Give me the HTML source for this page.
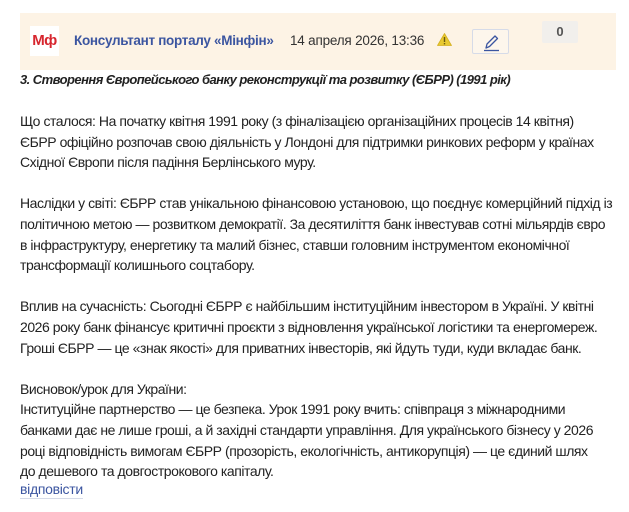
<!DOCTYPE html>
<html><head><meta charset="utf-8"><style>
*{margin:0;padding:0;box-sizing:border-box}
body{width:629px;height:512px;background:#fff;font-family:"Liberation Sans",Arial,sans-serif;color:#222;position:relative;overflow:hidden}
.hdr{position:absolute;left:20px;top:13px;width:596px;height:57px;background:#fdf3e5}
.logo{position:absolute;left:10px;top:13px;width:29px;height:30px;background:#fff;color:#d7262e;font-weight:bold;font-size:15px;line-height:30px;text-align:center;letter-spacing:-0.5px}
.name{position:absolute;left:54px;top:20px;font-size:13.5px;font-weight:bold;color:#3b55a0;letter-spacing:-0.3px}
.date{position:absolute;left:270px;top:20px;font-size:13.5px;color:#333;letter-spacing:-0.2px}
.warn{position:absolute;left:417px;top:20px}
.edit{position:absolute;left:452px;top:16px;width:37px;height:25px;border:1px solid #d6dbe8;border-radius:2px;background:#fdf6ec}
.cnt{position:absolute;left:522px;top:8px;width:36px;height:22px;background:#f1efec;border-radius:2px;font-size:13px;font-weight:bold;color:#555;text-align:center;line-height:22px}
.title{position:absolute;left:20px;top:72px;font-size:13px;font-weight:bold;font-style:italic;color:#222;letter-spacing:-0.55px;white-space:nowrap}
.txt{position:absolute;left:20px;top:111px;font-size:14px;line-height:20.6px;white-space:nowrap;letter-spacing:-0.45px}
a{position:absolute;left:20px;top:480px;font-size:14px;color:#3b55a0;text-decoration:none;border-bottom:1px solid #d6dbe8;letter-spacing:-0.3px;line-height:18px}
</style></head><body>
<div class="hdr">
<div class="logo">Мф</div>
<div class="name">Консультант порталу «Мінфін»</div>
<div class="date">14 апреля 2026, 13:36</div>
<svg class="warn" width="15" height="13" viewBox="0 0 15 13"><path d="M7.5 0.5L14.5 12.5H0.5Z" fill="#e8c930" stroke="#d4b020" stroke-width="0.8" stroke-linejoin="round"/><rect x="6.8" y="4" width="1.4" height="5" fill="#6b5a10"/><rect x="6.8" y="10" width="1.4" height="1.4" fill="#6b5a10"/></svg>
<div class="edit"><svg width="37" height="25" viewBox="0 0 37 25"><path d="M13 18L14 14L22 6L24.5 8.5L16.5 16.5Z" fill="none" stroke="#3b55a0" stroke-width="1.3" stroke-linejoin="round"/><line x1="11" y1="20.5" x2="26" y2="20.5" stroke="#3b55a0" stroke-width="1.3"/></svg></div>
<div class="cnt">0</div>
</div>
<div class="title">3. Створення Європейського банку реконструкції та розвитку (ЄБРР) (1991 рік)</div>
<div class="txt">Що сталося: На початку квітня 1991 року (з фіналізацією організаційних процесів 14 квітня)<br>ЄБРР офіційно розпочав свою діяльність у Лондоні для підтримки ринкових реформ у країнах<br>Східної Європи після падіння Берлінського муру.<br><br>Наслідки у світі: ЄБРР став унікальною фінансовою установою, що поєднує комерційний підхід із<br>політичною метою — розвитком демократії. За десятиліття банк інвестував сотні мільярдів євро<br>в інфраструктуру, енергетику та малий бізнес, ставши головним інструментом економічної<br>трансформації колишнього соцтабору.<br><br>Вплив на сучасність: Сьогодні ЄБРР є найбільшим інституційним інвестором в Україні. У квітні<br>2026 року банк фінансує критичні проєкти з відновлення української логістики та енергомереж.<br>Гроші ЄБРР — це «знак якості» для приватних інвесторів, які йдуть туди, куди вкладає банк.<br><br>Висновок/урок для України:<br>Інституційне партнерство — це безпека. Урок 1991 року вчить: співпраця з міжнародними<br>банками дає не лише гроші, а й західні стандарти управління. Для українського бізнесу у 2026<br>році відповідність вимогам ЄБРР (прозорість, екологічність, антикорупція) — це єдиний шлях<br>до дешевого та довгострокового капіталу.</div>
<a href="#">відповісти</a>
</body></html>
